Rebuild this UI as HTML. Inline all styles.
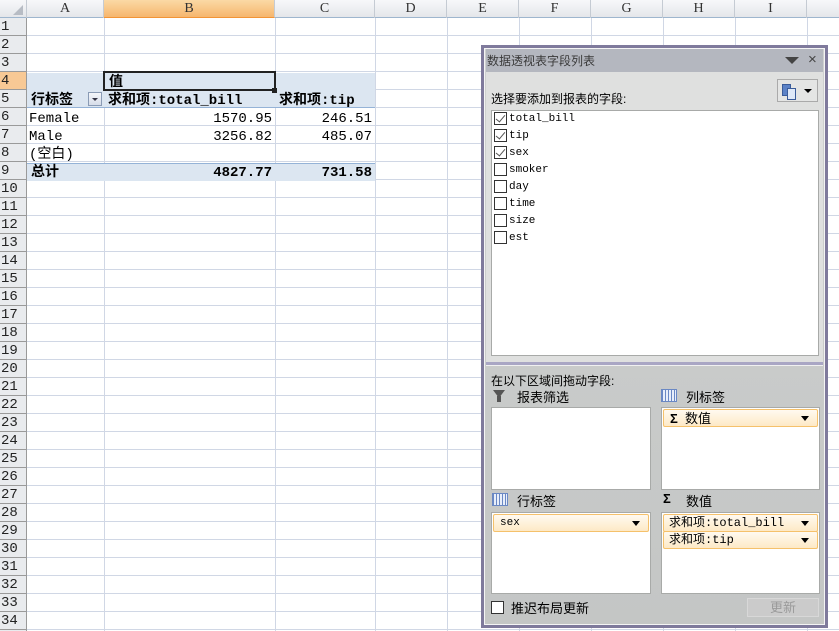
<!DOCTYPE html>
<html><head><meta charset="utf-8"><style>
*{margin:0;padding:0;box-sizing:border-box}
body{width:839px;height:631px;overflow:hidden;background:#fff;position:relative;font-family:"Liberation Mono","Noto Sans CJK SC",monospace;font-size:14px;color:#000}
.a{position:absolute}
#grid{left:27px;top:18px;width:812px;height:613px;background:repeating-linear-gradient(to bottom,transparent 0,transparent 17px,#d0d7e5 17px,#d0d7e5 18px)}
.vl{position:absolute;top:18px;width:1px;height:613px;background:#d0d7e5}
#hdr{left:0;top:0;width:839px;height:18px;background:linear-gradient(#f7f8fa,#e4e6ea);border-bottom:1px solid #9eb6ce}
.ch{position:absolute;top:0;height:18px;line-height:18px;text-align:center;color:#333;font-family:"Liberation Serif",serif;font-size:14px;border-right:1px solid #c5cbd3}
#rh{left:0;top:18px;width:27px;height:613px;background:#e9ebee;border-right:1px solid #9a9a9a}
.rn{position:absolute;height:18px;line-height:19px;font-family:"Liberation Mono",monospace;font-size:14px;color:#222;border-bottom:1px solid #9a9a9a;width:26px;left:0;padding-left:1px}
.t{position:absolute;height:18px;line-height:20px;white-space:nowrap}
.b{font-weight:bold}
.panel{left:481px;top:45px;width:347px;height:583px;background:#7f7a9c;padding:3px}
.cb{position:absolute;width:13px;height:13px;border:1px solid #333;background:#fff}
.cb.k::after{content:"";position:absolute;left:3px;top:0px;width:4px;height:8px;border:solid #555;border-width:0 1.5px 1.5px 0;transform:rotate(40deg)}
.fl{position:absolute;left:509px;font-size:11px;height:17px;line-height:19px}
.box{position:absolute;background:#fff;border:1px solid #a8aaa8}
.pill{position:absolute;height:18px;border:1px solid #f5c16b;border-radius:2px;background:linear-gradient(#fffaf0,#fde9c6);font-size:12px;line-height:17px;padding-left:6px}
.pill::after{content:"";position:absolute;right:8px;top:6px;border:4px solid transparent;border-top:5px solid #000;border-bottom:0}
.lbl{position:absolute;font-family:"Liberation Sans","Noto Sans CJK SC",sans-serif;font-size:13px}
.gi{position:absolute;width:16px;height:13px;background:repeating-linear-gradient(90deg,#6a88c4 0,#6a88c4 1px,#e8eefa 1px,#e8eefa 3px),#fff;border:1px solid #6a88c4}
</style></head><body>
<div class="a" id="grid"></div>
<div class="vl" style="left:104px"></div><div class="vl" style="left:275px"></div><div class="vl" style="left:375px"></div><div class="vl" style="left:447px"></div><div class="vl" style="left:519px"></div><div class="vl" style="left:591px"></div><div class="vl" style="left:663px"></div><div class="vl" style="left:735px"></div><div class="vl" style="left:807px"></div>
<div class="a" style="left:27px;top:73px;width:348px;height:35px;background:#dce6f1;border-bottom:1px solid #95b3d7"></div>
<div class="a" style="left:27px;top:163px;width:348px;height:18px;background:#dce6f1;border-top:1px solid #95b3d7"></div>
<div class="a" style="left:103px;top:71px;width:173px;height:20px;border:2px solid #222"></div>
<div class="a" style="left:272px;top:88px;width:5px;height:5px;background:#222"></div>
<div class="a" id="hdr">
<div class="a" style="left:0;top:0;width:27px;height:18px;border-right:1px solid #c5cbd3"><div class="a" style="right:3px;bottom:3px;border-left:10px solid transparent;border-bottom:10px solid #b7bcc4"></div></div>
<div class="ch" style="left:27px;width:77px">A</div>
<div class="ch" style="left:104px;width:171px;background:linear-gradient(#fbd9a5,#f6b66e);border-bottom:1px solid #f29436">B</div>
<div class="ch" style="left:275px;width:100px">C</div>
<div class="ch" style="left:375px;width:72px">D</div>
<div class="ch" style="left:447px;width:72px">E</div>
<div class="ch" style="left:519px;width:72px">F</div>
<div class="ch" style="left:591px;width:72px">G</div>
<div class="ch" style="left:663px;width:72px">H</div>
<div class="ch" style="left:735px;width:72px">I</div>
</div>
<div class="a" id="rh">
<div class="rn" style="top:0">1</div><div class="rn" style="top:18px">2</div><div class="rn" style="top:36px">3</div><div class="rn" style="top:54px;background:#f8c995">4</div><div class="rn" style="top:72px">5</div><div class="rn" style="top:90px">6</div><div class="rn" style="top:108px">7</div><div class="rn" style="top:126px">8</div><div class="rn" style="top:144px">9</div><div class="rn" style="top:162px">10</div><div class="rn" style="top:180px">11</div><div class="rn" style="top:198px">12</div><div class="rn" style="top:216px">13</div><div class="rn" style="top:234px">14</div><div class="rn" style="top:252px">15</div><div class="rn" style="top:270px">16</div><div class="rn" style="top:288px">17</div><div class="rn" style="top:306px">18</div><div class="rn" style="top:324px">19</div><div class="rn" style="top:342px">20</div><div class="rn" style="top:360px">21</div><div class="rn" style="top:378px">22</div><div class="rn" style="top:396px">23</div><div class="rn" style="top:414px">24</div><div class="rn" style="top:432px">25</div><div class="rn" style="top:450px">26</div><div class="rn" style="top:468px">27</div><div class="rn" style="top:486px">28</div><div class="rn" style="top:504px">29</div><div class="rn" style="top:522px">30</div><div class="rn" style="top:540px">31</div><div class="rn" style="top:558px">32</div><div class="rn" style="top:576px">33</div><div class="rn" style="top:594px">34</div>
</div>
<div class="t b" style="left:109px;top:73px">值</div>
<div class="t b" style="left:31px;top:91px">行标签</div>
<div class="a" style="left:88px;top:92px;width:14px;height:14px;border:1px solid #8a9bb5;background:linear-gradient(#f4f6fa,#d6dde9)"><div class="a" style="left:3px;top:5px;border:3px solid transparent;border-top:3px solid #334;border-bottom:0"></div></div>
<div class="t b" style="left:108px;top:91px">求和项:total_bill</div>
<div class="t b" style="left:279px;top:91px">求和项:tip</div>
<div class="t" style="left:29px;top:109px">Female</div>
<div class="t" style="right:567px;top:109px">1570.95</div>
<div class="t" style="right:467px;top:109px">246.51</div>
<div class="t" style="left:29px;top:127px">Male</div>
<div class="t" style="right:567px;top:127px">3256.82</div>
<div class="t" style="right:467px;top:127px">485.07</div>
<div class="t" style="left:29px;top:145px">(空白)</div>
<div class="t b" style="left:31px;top:163px">总计</div>
<div class="t b" style="right:567px;top:163px">4827.77</div>
<div class="t b" style="right:467px;top:163px">731.58</div>
<div class="a panel">
<div class="a" style="left:3px;top:3px;width:341px;height:577px;background:linear-gradient(#cfd1d0,#c4c6c5);border:1px solid #f4f4f4"></div>
</div>
<div class="a" style="left:486px;top:49px;width:337px;height:23px;background:#b4b7bf"></div>
<div class="lbl" style="left:487px;top:52px;color:#3a3a3a;font-size:12px">数据透视表字段列表</div>
<div class="a" style="left:785px;top:57px;border:7px solid transparent;border-top:7px solid #444;border-bottom:0"></div>
<div class="lbl" style="left:808px;top:51px;font-size:15px;color:#444">×</div>
<div class="a" style="left:486px;top:72px;width:337px;height:290px;background:#dfe0df"></div>
<div class="a" style="left:777px;top:79px;width:41px;height:23px;border:1px solid #aaa;background:#e4e5e4"></div>
<div class="a" style="left:782px;top:84px;width:9px;height:12px;background:#5b82c7;border:1px solid #3a5c9a"></div>
<div class="a" style="left:787px;top:88px;width:9px;height:12px;background:#dfe9f8;border:1px solid #3a5c9a"></div>
<div class="a" style="left:804px;top:89px;border:4px solid transparent;border-top:4px solid #000;border-bottom:0"></div>
<div class="lbl" style="left:491px;top:90px;font-size:12px">选择要添加到报表的字段:</div>
<div class="box" style="left:491px;top:110px;width:328px;height:246px"></div>
<div class="cb k" style="left:494px;top:112px"></div><div class="fl" style="top:110px">total_bill</div>
<div class="cb k" style="left:494px;top:129px"></div><div class="fl" style="top:127px">tip</div>
<div class="cb k" style="left:494px;top:146px"></div><div class="fl" style="top:144px">sex</div>
<div class="cb" style="left:494px;top:163px"></div><div class="fl" style="top:161px">smoker</div>
<div class="cb" style="left:494px;top:180px"></div><div class="fl" style="top:178px">day</div>
<div class="cb" style="left:494px;top:197px"></div><div class="fl" style="top:195px">time</div>
<div class="cb" style="left:494px;top:214px"></div><div class="fl" style="top:212px">size</div>
<div class="cb" style="left:494px;top:231px"></div><div class="fl" style="top:229px">est</div>
<div class="a" style="left:486px;top:362px;width:337px;height:4px;background:#a9a6c4;border-bottom:1px solid #f0f0f0"></div>
<div class="lbl" style="left:491px;top:372px;font-size:12px">在以下区域间拖动字段:</div>
<div class="a" style="left:493px;top:390px;border:6px solid transparent;border-top:8px solid #555;border-bottom:0;width:0"></div>
<div class="a" style="left:497px;top:396px;width:4px;height:6px;background:#555"></div>
<div class="lbl" style="left:517px;top:387px">报表筛选</div>
<div class="gi" style="left:661px;top:389px"></div>
<div class="lbl" style="left:686px;top:387px">列标签</div>
<div class="box" style="left:491px;top:407px;width:160px;height:83px"></div>
<div class="box" style="left:661px;top:407px;width:159px;height:83px"></div>
<div class="pill" style="left:663px;top:409px;width:155px;font-family:'Liberation Sans','Noto Sans CJK SC',sans-serif;font-size:13px;padding-left:6px"><b>Σ</b>&nbsp; 数值</div>
<div class="gi" style="left:492px;top:493px"></div>
<div class="lbl" style="left:517px;top:491px">行标签</div>
<div class="lbl" style="left:663px;top:491px;font-weight:bold">Σ</div>
<div class="lbl" style="left:686px;top:491px">数值</div>
<div class="box" style="left:491px;top:512px;width:160px;height:82px"></div>
<div class="box" style="left:661px;top:512px;width:159px;height:82px"></div>
<div class="pill" style="left:493px;top:514px;width:156px;font-size:11px">sex</div>
<div class="pill" style="left:663px;top:514px;width:155px;padding-left:5px">求和项:total_bill</div>
<div class="pill" style="left:663px;top:531px;width:155px;padding-left:5px">求和项:tip</div>
<div class="cb" style="left:491px;top:601px;width:13px;height:13px"></div>
<div class="lbl" style="left:511px;top:598px">推迟布局更新</div>
<div class="a" style="left:747px;top:598px;width:72px;height:19px;background:#cbcbcb;border:1px solid #d8d8d8;color:#9a9a9a;font-family:'Liberation Sans','Noto Sans CJK SC',sans-serif;font-size:13px;text-align:center;line-height:17px">更新</div>
</body></html>
